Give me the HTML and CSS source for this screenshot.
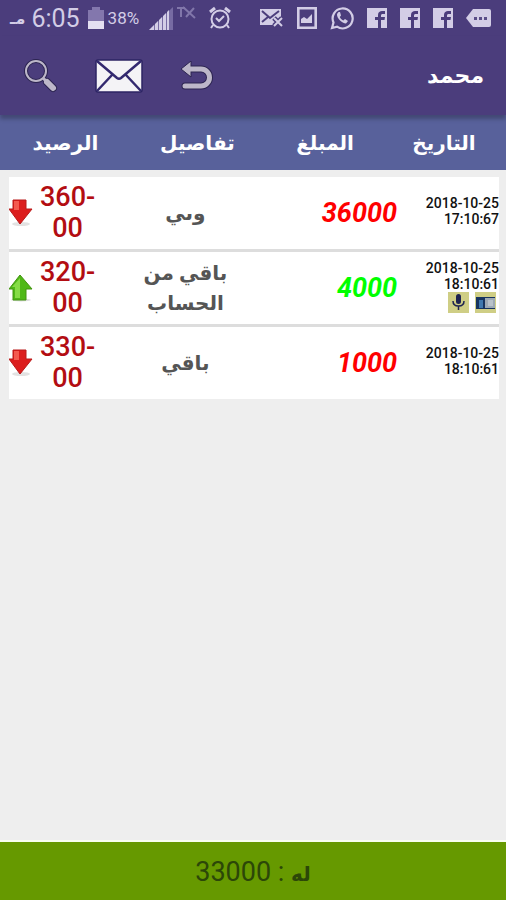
FILE: index.html
```html
<!DOCTYPE html>
<html lang="ar" dir="rtl">
<head>
    <meta charset="UTF-8">
    <meta name="viewport" content="width=device-width, initial-scale=1.0">
    <title>محمد</title>
    <link rel="stylesheet" href="styles.css">
</head>
<body>

    <!-- Status bar -->
    <div class="status" dir="ltr">
        <div class="status-side">
            <div class="clock"><b>مـ</b><span>6:05</span></div>
            <svg class="battery" width="16" height="22" viewBox="0 0 16 22"><path fill="#8377ad" d="M4 0h8v3h4v11H0V3h4z"/><path fill="#e4e0f2" d="M0 14h16v8H0z"/></svg>
            <span class="percent">38%</span>
            <svg class="signal" width="24" height="23" viewBox="0 0 24 23"><path fill="#776ba3" d="M24 0v23H0z"/><path fill="#d3cde6" d="M0 23l5-5v5zM6 17l3-3v9H6zM10 13l3-3v13h-3zM14 9l3-3v17h-3zM18 5l2-2v20h-2z"/></svg>
            <svg class="no-data" width="19" height="14" viewBox="0 0 19 14" fill="none" stroke="#8176aa" stroke-width="2"><path d="M0 2h8M4 2v9M9 11l8-9M6 1l12 11"/></svg>
            <svg width="24" height="24" viewBox="0 0 24 24" fill="none" stroke="#d3cde6" stroke-width="2"><circle cx="12" cy="13" r="8.5"/><path d="M8 12l3 3 5-5M5 19l-2 3M19 19l2 3"/><path stroke-width="3" d="M2 6l5-4M22 6l-5-4"/></svg>
        </div>
        <div class="status-side status-notes">
            <svg width="24" height="20" viewBox="0 0 24 20"><path fill="#d3cde6" d="M0 1h21v16H0z"/><path fill="none" stroke="#4b3d7c" stroke-width="2" d="M2 3l8 7 9-7M2 14l6-5"/><path stroke="#4b3d7c" stroke-width="5" d="M14 10l8 8M22 10l-8 8"/><path stroke="#d3cde6" stroke-width="2" d="M14 10l8 8M22 10l-8 8"/></svg>
            <svg width="20" height="22" viewBox="0 0 20 22"><path fill="none" stroke="#d3cde6" stroke-width="2.6" d="M1.3 1.3h17.4v19.4H1.3z"/><path fill="#d3cde6" d="M4 16v-4l3-2 3 2 5-5v9z"/></svg>
            <svg width="24" height="24" viewBox="0 0 24 24"><path fill="none" stroke="#d3cde6" stroke-width="2.2" d="M2 22l1.500-5.500A10 10 0 1 1 7 20.700z"/><path fill="#d3cde6" d="M8.500 6L7 8c-.5 4 5 9.500 9 9.500l2-2.500-3-2-1.700 1.500c-1.700-.8-3-2-3.500-3.500L11 9.500 10 6z"/></svg>
            <svg width="20" height="20" viewBox="0 0 20 20"><path fill="#d3cde6" d="M0 0h20v20H0z"/><path fill="#4b3d7c" d="M11 20v-8H8V9h3V7c0-3 2-4 4-4h3v3h-2c-1.500 0-2 .5-2 1.500V9h4l-.5 3H14v8z"/></svg>
            <svg width="20" height="20" viewBox="0 0 20 20"><path fill="#d3cde6" d="M0 0h20v20H0z"/><path fill="#4b3d7c" d="M11 20v-8H8V9h3V7c0-3 2-4 4-4h3v3h-2c-1.500 0-2 .5-2 1.500V9h4l-.5 3H14v8z"/></svg>
            <svg width="20" height="20" viewBox="0 0 20 20"><path fill="#d3cde6" d="M0 0h20v20H0z"/><path fill="#4b3d7c" d="M11 20v-8H8V9h3V7c0-3 2-4 4-4h3v3h-2c-1.500 0-2 .5-2 1.500V9h4l-.5 3H14v8z"/></svg>
            <svg width="25" height="18" viewBox="0 0 25 18"><path fill="#d3cde6" d="M7 0h16q2 0 2 2v14q0 2-2 2H7L0 9z"/><path fill="#5a4d88" d="M8 8h3v3H8zM13 8h3v3h-3zM18 8h3v3h-3z"/></svg>
        </div>
    </div>

    <!-- Toolbar -->
    <header class="toolbar">
        <h1>محمد</h1>
        <div class="actions" dir="ltr">
            <button type="button" aria-label="بحث">
                <svg width="34" height="34" viewBox="0 0 34 34" fill="none"><circle cx="12" cy="12" r="10" stroke="#2c2450" stroke-width="4"/><circle cx="12" cy="12" r="10" stroke="#bdb7c9" stroke-width="2"/><path stroke="#2c2450" stroke-width="8" stroke-linecap="round" d="M23 23l6 6"/><path stroke="#bdb7c9" stroke-width="3" d="M19 19l4 4"/><path stroke="#bdb7c9" stroke-width="6" stroke-linecap="round" d="M23 23l6 6"/></svg>
            </button>
            <button type="button" aria-label="رسالة">
                <svg width="48" height="34" viewBox="0 0 48 34"><rect x="1" y="1" width="46" height="32" rx="2" fill="#f4f3f6" stroke="#2c2463" stroke-width="1.500"/><path fill="none" stroke="#33296f" stroke-width="2.500" d="M2 2l20 17q2 1.500 4 0L46 2M2 32l15-16M46 32L31 16"/></svg>
            </button>
            <button type="button" aria-label="رجوع">
                <svg width="34" height="30" viewBox="0 0 34 30" fill="none"><path stroke="#2c2450" stroke-width="7" stroke-linecap="round" d="M9 8h12a8.500 8.500 0 0 1 0 17H5"/><path fill="#bdb7c9" stroke="#2c2450" d="M1 8l10-8v16z"/><path stroke="#bdb7c9" stroke-width="5" stroke-linecap="round" d="M9 8h12a8.500 8.500 0 0 1 0 17H5"/></svg>
            </button>
        </div>
    </header>

    <!-- Account rows -->
    <main>
        <table class="ledger">
            <thead>
                <tr>
                    <th class="date">التاريخ</th>
                    <th class="amount">المبلغ</th>
                    <th class="details">تفاصيل</th>
                    <th class="balance">الرصيد</th>
                </tr>
            </thead>
            <tbody>
                <tr class="gap"><td colspan="4"></td></tr>
                <tr>
                    <td class="date" dir="ltr">2018-10-25<br>17:10:67</td>
                    <td class="amount debit">36000</td>
                    <td class="details">وىي</td>
                    <td class="balance">
                        <div class="balance-row" dir="ltr">
                            <svg width="24" height="28" viewBox="0 0 24 28"><ellipse cx="12" cy="25" rx="9" ry="2" fill="#e2e2e2"/><path fill="#dc1d1d" stroke="#b91a1a" d="M4 1h13v9h6L11 25 0 10h4z"/><path fill="#f45a50" d="M5 2h5v9H5z"/></svg>
                            <span>360-<br>00</span>
                        </div>
                    </td>
                </tr>
                <tr>
                    <td class="date" dir="ltr">2018-10-25<br>18:10:61
                        <div class="attachments">
                            <svg width="21" height="21" viewBox="0 0 21 21"><path fill="#cfce85" d="M0 0h21v21H0z"/><rect x="8" y="2" width="5" height="10" rx="2.500" fill="#1d2350"/><path fill="none" stroke="#1d2350" stroke-width="1.500" d="M5 9q0 5 5.500 5T16 9M10.500 14v4"/></svg>
                            <svg width="21" height="21" viewBox="0 0 21 21"><path fill="#cfce85" d="M0 0h21v21H0z"/><path fill="#17345f" d="M1 5h19v12H1z"/><path fill="#3f78ae" d="M4 8h4v8H4z"/><path fill="#9da9b4" d="M10 6h10v10H10z"/><path fill="#b9c2ca" d="M13 8h5v6h-5z"/></svg>
                        </div>
                    </td>
                    <td class="amount credit">4000</td>
                    <td class="details">باقي من الحساب</td>
                    <td class="balance">
                        <div class="balance-row" dir="ltr">
                            <svg width="24" height="28" viewBox="0 0 24 28"><ellipse cx="12" cy="26" rx="10" ry="1.500" fill="#dedede"/><path fill="#4fb817" stroke="#43940f" d="M11 1l12 14h-6v11H4V15H0z"/><path fill="#86dc46" d="M11 4v20H6V13H3z"/></svg>
                            <span>320-<br>00</span>
                        </div>
                    </td>
                </tr>
                <tr>
                    <td class="date" dir="ltr">2018-10-25<br>18:10:61</td>
                    <td class="amount debit">1000</td>
                    <td class="details">باقي</td>
                    <td class="balance">
                        <div class="balance-row" dir="ltr">
                            <svg width="24" height="28" viewBox="0 0 24 28"><ellipse cx="12" cy="25" rx="9" ry="2" fill="#e2e2e2"/><path fill="#dc1d1d" stroke="#b91a1a" d="M4 1h13v9h6L11 25 0 10h4z"/><path fill="#f45a50" d="M5 2h5v9H5z"/></svg>
                            <span>330-<br>00</span>
                        </div>
                    </td>
                </tr>
            </tbody>
        </table>
    </main>

    <footer class="total"><b>له</b> : 33000</footer>

</body>
</html>
```
FILE: styles.css
```css
* {
    box-sizing: border-box;
}
body {
    display: flex;
    flex-direction: column;
    min-height: 100vh;
    margin: 0;
    background-color: #eeeeee;
    font-family: Roboto, "DejaVu Sans", sans-serif;
}
svg {
    display: block;
    flex-shrink: 0;
}
.status {
    display: flex;
    justify-content: space-between;
    height: 36px;
    padding: 0 15px 0 10px;
    background-color: #4b3d7c;
    color: #d3cde6;
}
.status-side {
    display: flex;
    align-items: center;
}
.status-notes {
    gap: 13px;
}
.clock {
    display: flex;
    align-items: center;
    gap: 6px;
    font-size: 25px;
}
.clock b {
    font-size: 16px;
}
.battery {
    margin: 0 4px 0 8px;
}
.percent {
    font-size: 17px;
}
.signal {
    margin: 0 4px 0 10px;
}
.no-data {
    align-self: flex-start;
    margin: 6px 12px 0 0;
}
.toolbar {
    display: flex;
    align-items: center;
    justify-content: space-between;
    height: 79px;
    padding: 0 22px 0 24px;
    background-color: #4b3d7c;
    position: relative;
    box-shadow: 0 4px 4px rgba(0, 0, 0, 0.25); /* shade over the table head */
}
.toolbar h1 {
    margin: 0;
    color: #ffffff;
    font-size: 22px;
}
.actions {
    display: flex;
    align-items: center;
    gap: 37px;
}
.actions button {
    padding: 0;
    border: none;
    background: none;
    cursor: pointer;
}
main {
    flex: 1;
    padding: 0 7px 0 9px;
    overflow: hidden;
}
.ledger {
    width: 100%;
    table-layout: fixed;
    border-collapse: separate;
    border-spacing: 0;
}
.ledger th {
    height: 55px;
    padding: 0;
    background-color: #58619b;
    color: #ffffff;
    font-size: 20px;
}
/* carry the head colour out to the window edges */
.ledger th:first-child {
    box-shadow: 9px 0 0 #58619b;
}
.ledger th:last-child {
    box-shadow: -9px 0 0 #58619b;
}
.ledger th.date {
    width: 20%;
    padding-right: 12px;
}
.ledger th.amount {
    width: 31%;
}
.ledger th.details {
    width: 26%;
    padding-left: 24px;
}
.ledger th.balance {
    width: 23%;
}
.ledger td {
    height: 75px;
    padding: 0;
    background-color: #ffffff;
    border-bottom: 3px solid #dddddd;
}
.ledger tr:last-child td {
    height: 72px;
    border-bottom: none;
}
.ledger .gap td {
    height: 7px;
    background: none;
    border: none;
}
.ledger td.date {
    padding-bottom: 4px;
    color: #111111;
    font-size: 14px;
    font-weight: 500;
    line-height: 16px;
    text-align: right;
}
.attachments {
    display: flex;
    justify-content: flex-end;
    gap: 6px;
    padding-right: 3px;
}
.ledger td.amount {
    padding-right: 4px;
    font-size: 27px;
    font-style: italic;
    font-weight: 700;
    text-align: right;
}
.debit {
    color: #ff0000;
}
.credit {
    color: #00ff00;
}
.ledger td.details {
    padding: 0 16px;
    color: #555555;
    font-size: 20px;
    font-weight: 700;
    line-height: 30px;
    text-align: center;
}
.balance-row {
    display: flex;
    align-items: center;
    gap: 7px;
}
.balance-row span {
    color: #b30d12;
    font-size: 27px;
    font-weight: 500;
    line-height: 31px;
    text-align: center;
}
.total {
    padding: 14px 0 10px;
    border-top: 2px solid #f8fff0;
    background-color: #669900;
    color: #2c4708;
    font-size: 27px;
    line-height: 32px;
    text-align: center;
}
.total b {
    font-size: 20px;
}
```
